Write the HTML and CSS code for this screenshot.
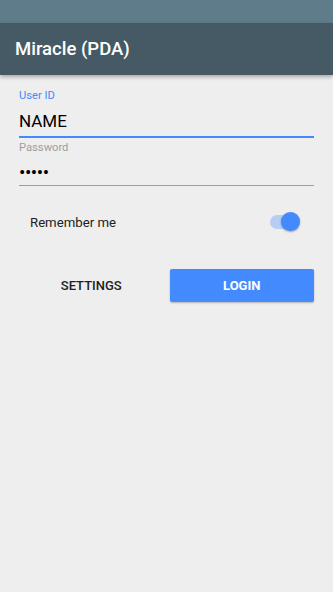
FILE: index.html
```html
<!DOCTYPE html>
<html>
<head>
    <meta charset="utf-8" />
    <title>Miracle (PDA)</title>
    <link rel="stylesheet" href="styles.css">
</head>
<body>
    <div class="status"></div>
    <div class="appbar">Miracle (PDA)</div>
    <div class="form">
        <div class="field">
            <div class="label active">User ID</div>
            <div class="input active">NAME</div>
        </div>
        <div class="field">
            <div class="label">Password</div>
            <div class="input pwd">&bull;&bull;&bull;&bull;&bull;</div>
        </div>
        <div class="remember">
            <span>Remember me</span>
            <div class="switch"><div class="track"></div><div class="thumb"></div></div>
        </div>
        <div class="buttons">
            <div class="btn flat">SETTINGS</div>
            <div class="btn raised">LOGIN</div>
        </div>
    </div>
</body>
</html>
```

FILE: styles.css
```css
* { box-sizing: border-box; }
html, body { margin: 0; padding: 0; height: 100%; }
body { background: #eeeeee; font-family: Roboto, "Liberation Sans", sans-serif; color: #212121; }
.status { height: 23px; background: #5f7c8a; }
.appbar { height: 52px; background: #455a64; color: #fff; font-size: 18.5px; font-weight: 500; padding-left: 15px; line-height: 52px; box-shadow: 0 2px 4px rgba(0,0,0,0.3); position: relative; }
.form { padding: 13px 19px 0 19px; }
.label { font-size: 11.2px; color: #9e9e9e; line-height: 16px; }
    .label.active { color: #448aff; }
.input { font-size: 17px; line-height: 22px; padding-top: 6px; padding-bottom: 5px; border-bottom: 1px solid #9e9e9e; margin-bottom: 2px; color: #000; }
    .input.active { border-bottom: 2px solid #448aff; padding-bottom: 4px; }
    .input.pwd { font-size: 19px; line-height: 20px; letter-spacing: -0.5px; padding-top: 7px; padding-bottom: 2px; margin-bottom: 0; }
.remember { display: flex; align-items: center; justify-content: space-between; padding: 0 12px 0 11px; height: 72px; font-size: 13.2px; }
.switch { position: relative; width: 32px; height: 20px; }
    .switch .track { position: absolute; left: 0; top: 3px; width: 28px; height: 14px; border-radius: 7px; background: #b6cdf6; }
    .switch .thumb { position: absolute; left: 11px; top: 0; width: 19px; height: 19px; border-radius: 50%; background: #448aff; box-shadow: 0 1px 2px rgba(0,0,0,0.35); }
.buttons { display: flex; gap: 6px; margin-top: 11px; }
.btn { flex: 1; height: 33px; line-height: 33px; text-align: center; font-size: 13px; font-weight: 500; border-radius: 2px; }
    .btn.flat { color: #212121; }
    .btn.raised { background: #448aff; color: #fff; font-weight: 700; box-shadow: 0 1px 2px rgba(0,0,0,0.25); }
```
